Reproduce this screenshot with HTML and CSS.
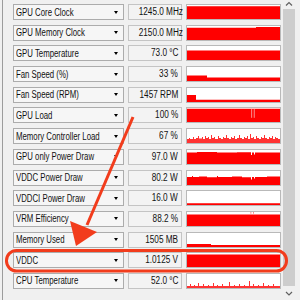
FILE: index.html
```html
<!DOCTYPE html>
<html lang="en">
<head>
  <meta charset="UTF-8" />
  <title>GPU-Z Sensors</title>
  <link rel="stylesheet" href="styles.css">
</head>
<body>
  <div class="window">
    <div class="sensors">
      <div class="row">
        <div class="name"><span>GPU Core Clock</span><i class="caret"></i></div>
        <div class="value"><span>1245.0 MHz</span></div>
        <div class="graph"><svg viewBox="0 0 93 14" preserveAspectRatio="none"><path d="M0 14V1.2H93V14Z"/></svg></div>
      </div>
      <div class="row">
        <div class="name"><span>GPU Memory Clock</span><i class="caret"></i></div>
        <div class="value"><span>2150.0 MHz</span></div>
        <div class="graph"><svg viewBox="0 0 93 14" preserveAspectRatio="none"><path d="M0 14V1.8H69V1H93V14Z"/></svg></div>
      </div>
      <div class="row">
        <div class="name"><span>GPU Temperature</span><i class="caret"></i></div>
        <div class="value"><span>73.0 °C</span></div>
        <div class="graph"><svg viewBox="0 0 93 14" preserveAspectRatio="none"><path d="M0 14V4.5H93V14Z"/></svg></div>
      </div>
      <div class="row">
        <div class="name"><span>Fan Speed (%)</span><i class="caret"></i></div>
        <div class="value"><span>33 %</span></div>
        <div class="graph"><svg viewBox="0 0 93 14" preserveAspectRatio="none"><path d="M0 14V8.5H20V10.5H93V14Z"/></svg></div>
      </div>
      <div class="row">
        <div class="name"><span>Fan Speed (RPM)</span><i class="caret"></i></div>
        <div class="value"><span>1457 RPM</span></div>
        <div class="graph"><svg viewBox="0 0 93 14" preserveAspectRatio="none"><path d="M0 14V7H9V11.8H93V14Z"/></svg></div>
      </div>
      <div class="row">
        <div class="name"><span>GPU Load</span><i class="caret"></i></div>
        <div class="value"><span>100 %</span></div>
        <div class="graph"><svg viewBox="0 0 93 14" preserveAspectRatio="none"><path d="M0 14V0.8H93V14Z"/><rect class="gap" x="64.3" y="0.8" width="0.8" height="9"/><rect class="gap" x="66.8" y="0.8" width="0.8" height="9"/></svg></div>
      </div>
      <div class="row">
        <div class="name"><span>Memory Controller Load</span><i class="caret"></i></div>
        <div class="value"><span>67 %</span></div>
        <div class="graph"><svg viewBox="0 0 93 14" preserveAspectRatio="none"><path class="noisy" d="M0 14V10H2V9H3V10H6V8H7V10H9V9H11V7H12V9.5H15V8H16V10H18V7H19V9H21V8H22V10H24V6H25V9H27V8H28V10H31V7H32V9H34V10H36V8H37V9H39V6H40V9H42V10H44V8H45V9H47V7H48V10H50V9H52V6H53V9H55V10H57V8H58V9H60V7H61V10H63V5H64V9H66V8H67V10H69V7H70V9H72V10H74V8H75V9H77V6H78V9H80V10H82V8H83V9H85V7H86V10H88V8H89V9H91V10H93V14Z"/></svg></div>
      </div>
      <div class="row">
        <div class="name"><span>GPU only Power Draw</span><i class="caret"></i></div>
        <div class="value"><span>97.0 W</span></div>
        <div class="graph"><svg viewBox="0 0 93 14" preserveAspectRatio="none"><path d="M0 14V2.5H10V2H30V2.6H50V2.2H64V5H65V2.5H67V4.5H68V2.4H93V14Z"/></svg></div>
      </div>
      <div class="row">
        <div class="name"><span>VDDC Power Draw</span><i class="caret"></i></div>
        <div class="value"><span>80.2 W</span></div>
        <div class="graph"><svg viewBox="0 0 93 14" preserveAspectRatio="none"><path d="M0 14V6H5V5H6V6H12V5.5H20V6.2H30V5H31V6H45V5.5H55V6.2H64V8.5H65V6H67V7.5H68V6H80V5.5H93V14Z"/></svg></div>
      </div>
      <div class="row">
        <div class="name"><span>VDDCI Power Draw</span><i class="caret"></i></div>
        <div class="value"><span>16.0 W</span></div>
        <div class="graph"><svg viewBox="0 0 93 14" preserveAspectRatio="none"><path d="M0 14V12.3H93V14Z"/></svg></div>
      </div>
      <div class="row">
        <div class="name"><span>VRM Efficiency</span><i class="caret"></i></div>
        <div class="value"><span>88.2 %</span></div>
        <div class="graph"><svg viewBox="0 0 93 14" preserveAspectRatio="none"><path d="M0 14V2.5H93V14Z"/><rect class="noisy" x="63.5" y="0.3" width="0.8" height="1.2"/><rect class="noisy" x="66" y="0.3" width="0.8" height="1.2"/></svg></div>
      </div>
      <div class="row">
        <div class="name"><span>Memory Used</span><i class="caret"></i></div>
        <div class="value"><span>1505 MB</span></div>
        <div class="graph"><svg viewBox="0 0 93 14" preserveAspectRatio="none"><path d="M0 14V11H24V12H93V14Z"/></svg></div>
      </div>
      <div class="row">
        <div class="name"><span>VDDC</span><i class="caret"></i></div>
        <div class="value"><span>1.0125 V</span></div>
        <div class="graph"><svg viewBox="0 0 93 14" preserveAspectRatio="none"><path d="M0 14V1.6H93V14Z"/></svg></div>
      </div>
      <div class="row">
        <div class="name"><span>CPU Temperature</span><i class="caret"></i></div>
        <div class="value"><span>52.0 °C</span></div>
        <div class="graph"><svg viewBox="0 0 93 14" preserveAspectRatio="none"><path class="noisy" d="M0 14V12H3V10H4V12H7V11H8V12H11V9H12V12H16V10H17V12H21V11H22V12H26V9H27V12H30V11H31V12H35V10H36V12H42V8H43V12H47V11H48V12H52V10H53V12H57V11H58V12H62V7H63V12H66V10H67V12H71V11H72V12H76V9H77V12H81V11H82V12H86V10H87V12H93V14Z"/></svg></div>
      </div>
    </div>

    <div class="scrollbar">
      <div class="scroll-btn up">
        <svg viewBox="0 0 12 9"><polyline points="3,5.5 6,2.5 9,5.5"/></svg>
      </div>
      <div class="thumb"></div>
      <div class="scroll-btn down">
        <svg viewBox="0 0 12 14"><polyline points="3,6 6,9 9,6"/></svg>
      </div>
    </div>
  </div>

  <!-- annotation drawn over the screenshot -->
  <svg class="annotation" viewBox="0 0 300 300">
    <line x1="133" y1="117" x2="87" y2="225"/>
    <polygon points="70,221 97,232 76,246"/>
    <rect x="6.5" y="250.5" width="280" height="20.5" rx="10"/>
  </svg>
</body>
</html>
```

FILE: styles.css
```css
body {
  margin: 0;
  background: #f0f0f0;
  font-family: "Liberation Sans", Arial, sans-serif;
  font-size: 10px;
  color: #111;
}

.window {
  display: flex;
  height: 300px;
  margin-left: 2px;
  border-left: 1px solid #9c9c9c;
  overflow: hidden;
}

.sensors {
  display: flex;
  flex-direction: column;
  gap: 4.7px;
  padding: 4px 0 0 10px;
}

.row {
  display: flex;
  gap: 4px;
  height: 16px;
}

/* the window font is narrower than Arial, so squeeze the text */
.name {
  width: 111px;
  box-sizing: border-box;
  display: flex;
  align-items: center;
  padding: 0 5px 0 2px;
  border: 1px solid #acacac;
  background: #f6f6f6;
  white-space: nowrap;
}

.name span {
  flex: 1 1 0;
  min-width: 0;
  transform: scaleX(0.78);
  transform-origin: left center;
}

.caret {
  flex: none;
  width: 0;
  height: 0;
  border-left: 2.5px solid transparent;
  border-right: 2.5px solid transparent;
  border-top: 3px solid #000;
}

.value {
  width: 54px;
  box-sizing: border-box;
  padding-right: 3px;
  border: 1px solid #c4c4c4;
  background: #f3f3f3;
  text-align: right;
  line-height: 14px;
  white-space: nowrap;
}

.value span {
  display: inline-block;
  transform: scaleX(0.82);
  transform-origin: right center;
}

.graph {
  width: 95px;
  box-sizing: border-box;
  border: 1px solid #b9b9b9;
  background: #fff;
}

.graph svg {
  display: block;
  width: 93px;
  height: 14px;
}

.graph path {
  fill: #f00;
}

.graph .noisy {
  fill: #f33;
}

.graph .gap {
  fill: #f8b0b0;
}

.scrollbar {
  display: flex;
  flex-direction: column;
  width: 12px;
  margin-left: 2px;
}

.scroll-btn svg {
  display: block;
  width: 12px;
  height: 100%;
}

.scroll-btn polyline {
  fill: none;
  stroke: #606060;
  stroke-width: 1.2;
}

.scroll-btn.up {
  height: 9px;
}

.scroll-btn.down {
  height: 14px;
}

.thumb {
  flex: 1;
  background: #cdcdcd;
}

.annotation {
  position: absolute;
  top: 0;
  left: 0;
  width: 300px;
  height: 300px;
  pointer-events: none;
}

.annotation line {
  stroke: #f23c1c;
  stroke-width: 3;
}

.annotation polygon {
  fill: #f23c1c;
}

.annotation rect {
  fill: none;
  stroke: #f23c1c;
  stroke-width: 3;
}
```
